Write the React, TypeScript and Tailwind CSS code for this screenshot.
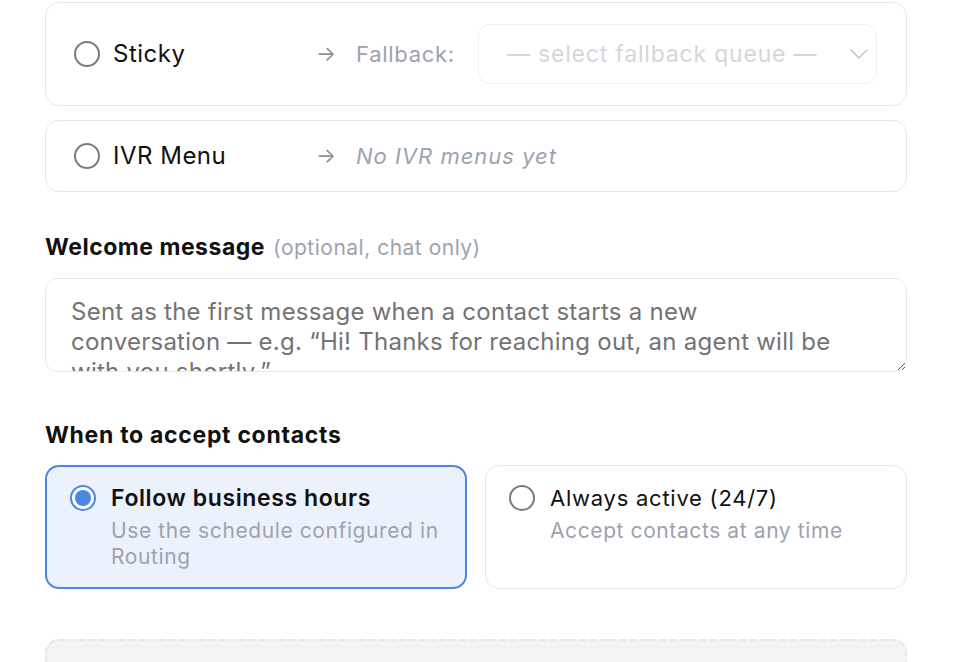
import React from 'react';

const font = { fontFamily: 'Inter, "Noto Sans", sans-serif' };

const welcomeHint =
  'Sent as the first message when a contact starts a new\nconversation — e.g. “Hi! Thanks for reaching out, an agent will be\nwith you shortly.”';

function Radio({ checked }: { checked?: boolean }) {
  if (checked) {
    return (
      <span className="flex h-[26px] w-[26px] shrink-0 items-center justify-center rounded-full border-2 border-[#4a86e6] bg-white">
        <span className="h-[16px] w-[16px] rounded-full bg-[#4a86e6]" />
      </span>
    );
  }
  return <span className="h-[26px] w-[26px] shrink-0 rounded-full border-2 border-[#7b7b7b] bg-white" />;
}

function Chevron() {
  return (
    <svg width="18" height="10" viewBox="0 0 18 10" fill="none" className="shrink-0">
      <path d="M1 1l8 8 8-8" stroke="#bfc2c6" strokeWidth="1.4" strokeLinecap="round" strokeLinejoin="round" />
    </svg>
  );
}

function StrategyRow({ label, children, tall }: { label: string; children: React.ReactNode; tall?: boolean }) {
  return (
    <div
      className={`flex items-center rounded-[14px] border border-[#e5e7eb] bg-white pl-[28px] pr-[29px] ${
        tall ? 'h-[104px]' : 'h-[72px]'
      }`}
    >
      <div className="flex w-[242px] shrink-0 items-center gap-[13px]">
        <Radio />
        <span className="text-[24px] tracking-[0.5px] text-[#111]">{label}</span>
      </div>
      <span className="w-[40px] shrink-0 text-[21px] text-[#8f9297]">→</span>
      {children}
    </div>
  );
}

function ScheduleOption({
  checked,
  title,
  desc,
}: {
  checked?: boolean;
  title: string;
  desc: string;
}) {
  return (
    <div
      className={`flex h-[124px] items-start gap-[15px] rounded-[14px] pl-[23px] pr-[22px] ${
        checked ? 'border-2 border-[#4a86e6] bg-[#ebf2fc] pt-[18px]' : 'border border-[#e5e7eb] bg-white pt-[19px]'
      }`}
    >
      <Radio checked={checked} />
      <div className="flex flex-col">
        <span
          className={`leading-[26px] text-[#111] ${
            checked ? 'text-[23px] font-semibold tracking-[0.6px]' : 'text-[22px] tracking-[0.75px]'
          }`}
        >
          {title}
        </span>
        <span className="mt-[7px] text-[21px] leading-[26px] tracking-[0.6px] text-[#9ca3af]">{desc}</span>
      </div>
    </div>
  );
}

export default function App() {
  return (
    <div className="h-[662px] w-[956px] overflow-hidden bg-white pt-[2px]" style={font}>
      <div className="ml-[45px] flex w-[862px] flex-col">
        <div className="flex flex-col gap-[14px]">
          <StrategyRow label="Sticky" tall>
            <span className="w-[122px] shrink-0 text-[22px] tracking-[0.7px] text-[#9ca3af]">Fallback:</span>
            <div className="flex h-[60px] flex-1 items-center justify-between rounded-[12px] border border-[#eff0f2] pl-[28px] pr-[8px]">
              <span className="text-[23px] tracking-[0.8px] text-[#d4d6da]">— select fallback queue —</span>
              <Chevron />
            </div>
          </StrategyRow>
          <StrategyRow label="IVR Menu">
            <span className="text-[22px] italic tracking-[1px] text-[#9ca3af]">No IVR menus yet</span>
          </StrategyRow>
        </div>

        <div className="mt-[41px] flex items-baseline gap-[8px] leading-[28px]">
          <span className="text-[23px] font-bold tracking-[0.5px] text-[#111]">Welcome message</span>
          <span className="text-[21px] tracking-[0.5px] text-[#9ca3af]">(optional, chat only)</span>
        </div>

        <textarea
          className="mt-[16px] h-[94px] w-full rounded-[12px] border border-[#e5e7eb] px-[25px] pt-[18px] text-[24px] leading-[30px] tracking-[0.25px] text-[#111] outline-none placeholder:text-[#737373]"
          placeholder={welcomeHint}
          style={font}
        />

        <div className="mt-[49px] text-[23px] font-bold leading-[28px] tracking-[0.7px] text-[#111]">
          When to accept contacts
        </div>

        <div className="mt-[16px] grid grid-cols-2 gap-[18px]">
          <ScheduleOption checked title="Follow business hours" desc="Use the schedule configured in Routing" />
          <ScheduleOption title="Always active (24/7)" desc="Accept contacts at any time" />
        </div>

        <div className="mt-[50px] h-[80px] shrink-0 rounded-[14px] border-2 border-dashed border-[#e5e7eb] bg-[#f3f4f6]" />
      </div>
    </div>
  );
}
